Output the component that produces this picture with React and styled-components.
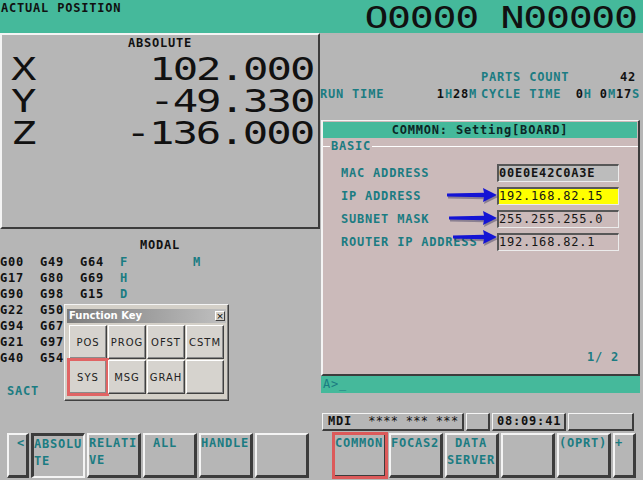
import React from "react";
import styled, { createGlobalStyle } from "styled-components";

// FANUC style setting screen (COMMON: Setting[BOARD]) with the function key popup on top

const GRAY = "#b6b6b6";
const TEAL = "#45b99b";
const INK = "#1b7c82";
const PINK = "#cbbaba";
const DARK = "#3c3c3c";
const LIGHT = "#f4f4f4";
const MONO = `"DejaVu Sans Mono", "Liberation Mono", monospace`;
const SANS = `"DejaVu Sans", "Liberation Sans", sans-serif`;

const GlobalStyle = createGlobalStyle`
  html, body { margin: 0; padding: 0; background: ${GRAY}; }
  body { font-family: ${MONO}; }
`;

const Screen = styled.div`
  position: relative;
  width: 643px;
  height: 480px;
  overflow: hidden;
  background: ${GRAY};
  display: flex;
  flex-direction: column;
  font-family: ${MONO};
  font-size: 12px;
  font-weight: bold;
  letter-spacing: 0.8px;
  line-height: 17px;
  color: #111;
`;

const Header = styled.header`
  flex: none;
  height: 33px;
  background: ${TEAL};
  display: flex;
  justify-content: space-between;
  align-items: flex-start;
`;

const ScreenTitle = styled.div`
  padding-left: 1px;
`;

const ProgramNo = styled.div`
  padding: 1px 6px 0 0;
  line-height: 33px;
`;

// wide CNC digits: DejaVu stretched horizontally
const BigText = styled.span`
  display: inline-block;
  font-size: ${(p) => p.$size}px;
  font-weight: normal;
  letter-spacing: ${(p) => p.$spacing}px;
  transform: scaleX(${(p) => p.$scale});
  transform-origin: ${(p) => p.$origin} center;
  color: #111;
`;

const Body = styled.div`
  flex: none;
  height: 399px;
  display: flex;
`;

const LeftCol = styled.div`
  width: 320px;
  display: flex;
  flex-direction: column;
`;

const PositionPanel = styled.section`
  height: 196px;
  box-sizing: border-box;
  border-top: 2px solid ${LIGHT};
  border-left: 2px solid ${LIGHT};
  border-right: 2px solid ${DARK};
  border-bottom: 2px solid ${DARK};
`;

const Caption = styled.div`
  text-align: center;
  line-height: 16px;
`;

const AxisList = styled.div`
  margin-top: 2px;
`;

const AxisRow = styled.div`
  height: 32px;
  line-height: 32px;
  display: flex;
  justify-content: space-between;
  padding: 0 5px 0 9px;
`;

const ModalSection = styled.section`
  flex: 1;
  padding-top: 8px;
`;

const ModalGrid = styled.div`
  margin-top: 1px;
`;

const ModalRow = styled.div`
  display: grid;
  grid-template-columns: 40px 40px 40px 73px 40px;
  height: 16px;
  line-height: 16px;
`;

const Code = styled.span`
  color: ${(p) => (p.$accent ? INK : "#111")};
`;

const Sact = styled.div`
  margin-top: 17px;
  padding-left: 7px;
  color: ${INK};
`;

const RightCol = styled.div`
  width: 323px;
  display: flex;
  flex-direction: column;
`;

const InfoArea = styled.div`
  height: 87px;
  box-sizing: border-box;
  padding: 36px 3px 0 0;
  display: grid;
  grid-template-columns: 157px 1fr;
  column-gap: 4px;
  align-content: start;
`;

const InfoCell = styled.div`
  display: flex;
  justify-content: space-between;
`;

const Label = styled.span`
  color: ${INK};
`;

const Unit = styled.span`
  color: ${INK};
`;

const Count = styled.span`
  margin-right: 4px;
`;

const SettingPanel = styled.section`
  position: relative;
  margin-left: 1px;
  width: 319px;
  height: 256px;
  box-sizing: border-box;
  background: ${PINK};
  border-top: 1px solid ${LIGHT};
  border-left: 2px solid ${LIGHT};
  border-right: 2px solid ${DARK};
  border-bottom: 2px solid ${DARK};
  display: flex;
  flex-direction: column;
`;

const TitleBar = styled.div`
  margin: 1px 1px 0 0;
  height: 16px;
  line-height: 16px;
  background: ${TEAL};
  text-align: center;
  color: #0c2626;
`;

const LegendRow = styled.div`
  height: 17px;
  display: flex;
  align-items: center;
`;

const LegendLine = styled.div`
  height: 1px;
  background: #fff;
  width: ${(p) => (p.$grow ? "auto" : "7px")};
  flex: ${(p) => (p.$grow ? 1 : "none")};
`;

const Legend = styled.span`
  color: ${INK};
  padding: 0 1px;
`;

const FieldList = styled.div`
  margin-top: 9px;
  padding-left: 18px;
  display: grid;
  grid-template-columns: 156px 122px;
  grid-auto-rows: 18px;
  row-gap: 5px;
`;

const FieldLabel = styled.span`
  color: ${INK};
  line-height: 18px;
`;

const ValueBox = styled.div`
  box-sizing: border-box;
  border-top: 2px solid #575757;
  border-left: 2px solid #575757;
  border-right: 1px solid #ececec;
  border-bottom: 1px solid #ececec;
  background: ${(p) => p.$bg};
  line-height: 15px;
  font-weight: ${(p) => (p.$bold ? "bold" : "normal")};
  color: #151515;
`;

const PageNo = styled.div`
  margin-top: auto;
  margin-bottom: 8px;
  padding-right: 19px;
  text-align: right;
  color: ${INK};
`;

const ArrowLayer = styled.svg`
  position: absolute;
  left: 0;
  top: 0;
  pointer-events: none;
`;

const InputBar = styled.div`
  margin-left: 1px;
  width: 319px;
  height: 17px;
  box-sizing: border-box;
  padding-left: 2px;
  background: ${TEAL};
  color: ${INK};
  font-weight: normal;
`;

const StatusRow = styled.div`
  margin: 20px 0 0 2px;
  height: 18px;
  display: flex;
  gap: 2px;
`;

const StatusBox = styled.div`
  width: ${(p) => p.$w}px;
  box-sizing: border-box;
  border-top: 1px solid ${LIGHT};
  border-left: 1px solid ${LIGHT};
  border-right: 2px solid ${DARK};
  border-bottom: 2px solid ${DARK};
  padding-left: ${(p) => p.$pad || 4}px;
  line-height: 15px;
  white-space: pre;
  overflow: hidden;
`;

const Stars = styled.span`
  letter-spacing: 0.3px;
  font-weight: normal;
`;

const SoftKeyRow = styled.nav`
  flex: 1;
  padding: 1px 0 0 7px;
  display: flex;
  align-items: flex-start;
`;

const KeyGroup = styled.div`
  display: flex;
  gap: 2px;
  margin-left: ${(p) => p.$offset || 0}px;
`;

const SoftKey = styled.div`
  width: ${(p) => p.$w}px;
  height: 45px;
  box-sizing: border-box;
  border-style: solid;
  border-width: ${(p) => (p.$pressed ? "3px 2px 2px 3px" : "2px 3px 3px 2px")};
  border-color: ${(p) =>
    p.$pressed
      ? `${DARK} ${LIGHT} ${LIGHT} ${DARK}`
      : `${LIGHT} ${DARK} ${DARK} ${LIGHT}`};
  outline: ${(p) => (p.$active ? "3px solid #dc5a5a" : "none")};
  outline-offset: -2px;
  color: ${INK};
  white-space: pre;
  overflow: hidden;
`;

const FnWindow = styled.div`
  position: absolute;
  left: 64px;
  top: 304px;
  width: 165px;
  height: 97px;
  box-sizing: border-box;
  padding: 4px 2px 0 2px;
  background: #d4d0c8;
  border-top: 1px solid ${LIGHT};
  border-left: 1px solid ${LIGHT};
  border-right: 1px solid #404040;
  border-bottom: 1px solid #404040;
  box-shadow: inset -1px -1px #808080;
  font-family: ${SANS};
  letter-spacing: 0;
`;

const FnTitle = styled.div`
  height: 14px;
  padding-left: 2px;
  display: flex;
  justify-content: space-between;
  align-items: center;
  background: linear-gradient(to right, #7c7c7c, #c0c0c0);
  color: #fff;
  font-size: 10px;
  font-weight: bold;
  line-height: 14px;
`;

const CloseBox = styled.span`
  width: 10px;
  height: 10px;
  margin-right: 1px;
  box-sizing: border-box;
  display: flex;
  align-items: center;
  justify-content: center;
  background: #d4d0c8;
  border-top: 1px solid #fff;
  border-left: 1px solid #fff;
  border-right: 1px solid #404040;
  border-bottom: 1px solid #404040;
  color: #000;
  font-size: 9px;
  font-weight: normal;
  line-height: 1;
`;

const FnGrid = styled.div`
  margin-top: 2px;
  padding-left: 2px;
  display: grid;
  grid-template-columns: repeat(4, 38px);
  grid-auto-rows: 34px;
  gap: 1px;
`;

const FnKey = styled.div`
  box-sizing: border-box;
  display: flex;
  align-items: center;
  justify-content: center;
  background: #d6d3ce;
  border-top: 1px solid #fff;
  border-left: 1px solid #fff;
  border-right: 1px solid #404040;
  border-bottom: 1px solid #404040;
  box-shadow: inset -1px -1px #8a8a8a;
  outline: ${(p) => (p.$active ? "3px solid #e06464" : "none")};
  outline-offset: -1px;
  color: #222;
  font-size: 10px;
  font-weight: normal;
  letter-spacing: 1px;
`;

const axes = [
  ["X", "102.000"],
  ["Y", "-49.330"],
  ["Z", "-136.000"],
];

const modal = [
  ["G00", "G49", "G64", "F", "M"],
  ["G17", "G80", "G69", "H"],
  ["G90", "G98", "G15", "D"],
  ["G22", "G50"],
  ["G94", "G67"],
  ["G21", "G97"],
  ["G40", "G54"],
];

const fields = [
  { label: "MAC ADDRESS", value: "00E0E42C0A3E", bg: "#bcbcbc", bold: true },
  { label: "IP ADDRESS", value: "192.168.82.15", bg: "#ffff00" },
  { label: "SUBNET MASK", value: "255.255.255.0", bg: "transparent" },
  { label: "ROUTER IP ADDRESS", value: "192.168.82.1", bg: "transparent" },
];

// tail x, tip x, y (inside the setting panel)
const arrows = [
  [124, 174, 74],
  [126, 174, 97],
  [130, 174, 116],
];

const leftKeys = [
  { text: "ABSOLU\nTE", pressed: true },
  { text: "RELATI\nVE" },
  { text: " ALL" },
  { text: "HANDLE" },
  { text: "" },
];

const rightKeys = [
  { text: "COMMON", active: true },
  { text: "FOCAS2" },
  { text: " DATA\nSERVER" },
  { text: "" },
  { text: "(OPRT)" },
];

const fnKeys = ["POS", "PROG", "OFST", "CSTM", "SYS", "MSG", "GRAH", ""];

function arrowPath(tail, tip, y) {
  return `M${tail} ${y - 1.5} L${tip - 13} ${y - 2.2} L${tip - 14} ${y - 7} L${tip} ${y} L${tip - 14} ${y + 7} L${tip - 13} ${y + 2.2} L${tail} ${y + 1.5} Z`;
}

export default function App() {
  return (
    <>
      <GlobalStyle />
      <Screen>
        <Header>
          <ScreenTitle>ACTUAL POSITION</ScreenTitle>
          <ProgramNo>
            <BigText $size={30} $spacing={-1} $scale={1.33} $origin="right">
              O0000 N00000
            </BigText>
          </ProgramNo>
        </Header>

        <Body>
          <LeftCol>
            <PositionPanel>
              <Caption>ABSOLUTE</Caption>
              <AxisList>
                {axes.map(([axis, value]) => (
                  <AxisRow key={axis}>
                    <BigText $size={32} $spacing={-1.5} $scale={1.32} $origin="left">
                      {axis}
                    </BigText>
                    <BigText $size={32} $spacing={-1.5} $scale={1.32} $origin="right">
                      {value}
                    </BigText>
                  </AxisRow>
                ))}
              </AxisList>
            </PositionPanel>

            <ModalSection>
              <Caption>MODAL</Caption>
              <ModalGrid>
                {modal.map((row, i) => (
                  <ModalRow key={i}>
                    {row.map((code, j) => (
                      <Code key={j} $accent={j >= 3}>
                        {code}
                      </Code>
                    ))}
                  </ModalRow>
                ))}
              </ModalGrid>
              <Sact>SACT</Sact>
            </ModalSection>
          </LeftCol>

          <RightCol>
            <InfoArea>
              <InfoCell />
              <InfoCell>
                <Label>PARTS COUNT</Label>
                <Count>42</Count>
              </InfoCell>
              <InfoCell>
                <Label>RUN TIME</Label>
                <span>
                  1<Unit>H</Unit>28<Unit>M</Unit>
                </span>
              </InfoCell>
              <InfoCell>
                <Label>CYCLE TIME</Label>
                <span>
                  0<Unit>H</Unit> 0<Unit>M</Unit>17<Unit>S</Unit>
                </span>
              </InfoCell>
            </InfoArea>

            <SettingPanel>
              <TitleBar>COMMON: Setting[BOARD]</TitleBar>
              <LegendRow>
                <LegendLine />
                <Legend>BASIC</Legend>
                <LegendLine $grow />
              </LegendRow>
              <FieldList>
                {fields.map((f) => (
                  <React.Fragment key={f.label}>
                    <FieldLabel>{f.label}</FieldLabel>
                    <ValueBox $bg={f.bg} $bold={f.bold}>
                      {f.value}
                    </ValueBox>
                  </React.Fragment>
                ))}
              </FieldList>
              <PageNo>1/ 2</PageNo>
              <ArrowLayer width="315" height="253" viewBox="0 0 315 253">
                {arrows.map(([tail, tip, y]) => (
                  <g key={y}>
                    <path d={arrowPath(tail, tip, y)} fill="rgba(20,20,70,0.35)" transform="translate(1 2)" />
                    <path d={arrowPath(tail, tip, y)} fill="#1414d4" />
                  </g>
                ))}
              </ArrowLayer>
            </SettingPanel>

            <InputBar>A&gt;_</InputBar>

            <StatusRow>
              <StatusBox $w={142} $pad={5}>
                {"MDI  "}
                <Stars>{"**** *** ***"}</Stars>
              </StatusBox>
              <StatusBox $w={24} />
              <StatusBox $w={74}>08:09:41</StatusBox>
              <StatusBox $w={66} />
            </StatusRow>
          </RightCol>
        </Body>

        <SoftKeyRow>
          <KeyGroup>
            <SoftKey $w={22}>{" <"}</SoftKey>
            {leftKeys.map((k, i) => (
              <SoftKey key={i} $w={54} $pressed={k.pressed}>
                {k.text}
              </SoftKey>
            ))}
          </KeyGroup>
          <KeyGroup $offset={24}>
            {rightKeys.map((k, i) => (
              <SoftKey key={i} $w={54} $active={k.active}>
                {k.text}
              </SoftKey>
            ))}
            <SoftKey $w={23}>+</SoftKey>
          </KeyGroup>
        </SoftKeyRow>

        <FnWindow>
          <FnTitle>
            Function Key
            <CloseBox>×</CloseBox>
          </FnTitle>
          <FnGrid>
            {fnKeys.map((k, i) => (
              <FnKey key={i} $active={k === "SYS"}>
                {k}
              </FnKey>
            ))}
          </FnGrid>
        </FnWindow>
      </Screen>
    </>
  );
}
